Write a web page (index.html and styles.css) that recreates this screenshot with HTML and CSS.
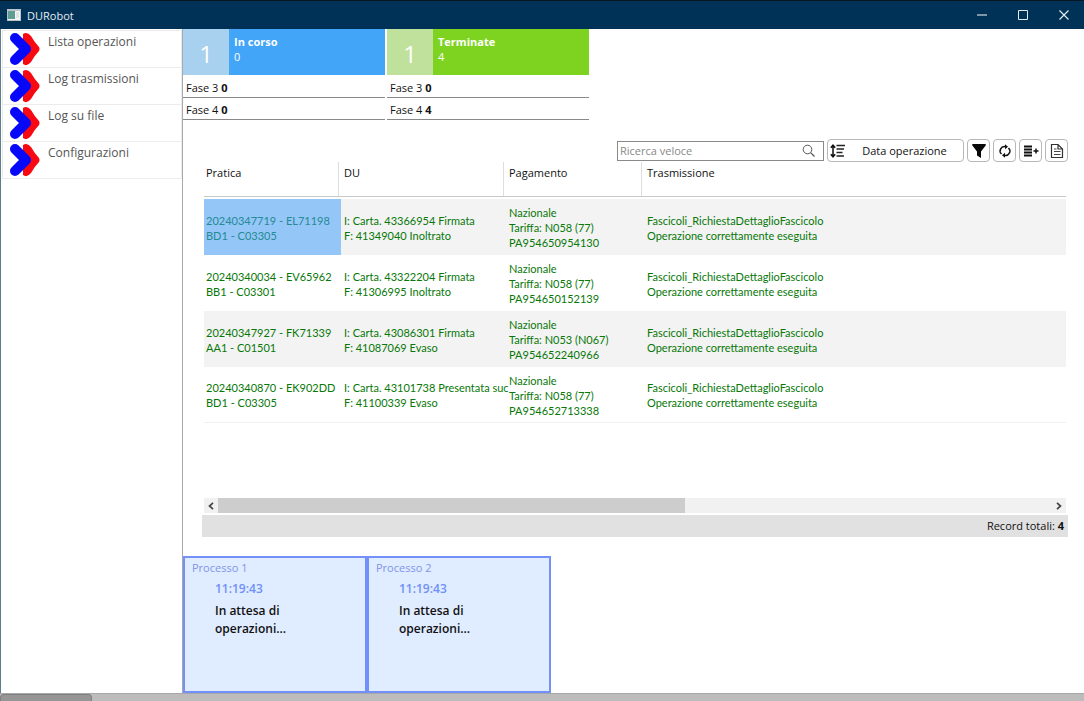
FILE: index.html
```html
<!DOCTYPE html>
<html lang="it">
<head>
<meta charset="utf-8">
<title>DURobot</title>
<link rel="stylesheet" href="styles.css">
</head>
<body>
<header class="titlebar">
  <svg class="app-icon" width="14" height="12" viewBox="0 0 14 12"><rect width="14" height="12" fill="#b9c4ca"/><rect x="1" y="2" width="12" height="9" fill="#f4f6f6"/><rect x="1" y="2" width="7" height="8" fill="#5f9c92"/><path d="M9 3h3v6H9z" fill="#dfe4e6"/></svg>
  <h1 class="app-title">DURobot</h1>
  <button class="win-btn" aria-label="Riduci"><svg width="12" height="12" viewBox="0 0 12 12"><path d="M1 6h10" stroke="#a9bac5" stroke-width="1.500" fill="none"/></svg></button>
  <button class="win-btn" aria-label="Ingrandisci"><svg width="12" height="12" viewBox="0 0 12 12"><path d="M1.500 1.500h9v9h-9z" stroke="#e4ebef" fill="none"/></svg></button>
  <button class="win-btn" aria-label="Chiudi"><svg width="12" height="12" viewBox="0 0 12 12"><path d="M1.500 1.500l9 9M10.500 1.500l-9 9" stroke="#e4ebef" stroke-width="1.200" fill="none"/></svg></button>
</header>
<div class="workspace">
  <nav class="sidebar">
    <a class="nav-item" href="#lista"><svg class="chevron" width="32" height="34" viewBox="0 0 32 34"><path d="M14 2Q18-1 22 4Q26 11 30 15Q31 17 30 19Q26 23 22 30Q18 35 14 32Z" fill="#f80810"/><path d="M6 6L17 17L6 28" stroke="#0808f8" stroke-width="10" stroke-linecap="round" stroke-linejoin="round" fill="none"/></svg><span>Lista operazioni</span></a>
    <a class="nav-item" href="#log"><svg class="chevron" width="32" height="34" viewBox="0 0 32 34"><path d="M14 2Q18-1 22 4Q26 11 30 15Q31 17 30 19Q26 23 22 30Q18 35 14 32Z" fill="#f80810"/><path d="M6 6L17 17L6 28" stroke="#0808f8" stroke-width="10" stroke-linecap="round" stroke-linejoin="round" fill="none"/></svg><span>Log trasmissioni</span></a>
    <a class="nav-item" href="#file"><svg class="chevron" width="32" height="34" viewBox="0 0 32 34"><path d="M14 2Q18-1 22 4Q26 11 30 15Q31 17 30 19Q26 23 22 30Q18 35 14 32Z" fill="#f80810"/><path d="M6 6L17 17L6 28" stroke="#0808f8" stroke-width="10" stroke-linecap="round" stroke-linejoin="round" fill="none"/></svg><span>Log su file</span></a>
    <a class="nav-item" href="#config"><svg class="chevron" width="32" height="34" viewBox="0 0 32 34"><path d="M14 2Q18-1 22 4Q26 11 30 15Q31 17 30 19Q26 23 22 30Q18 35 14 32Z" fill="#f80810"/><path d="M6 6L17 17L6 28" stroke="#0808f8" stroke-width="10" stroke-linecap="round" stroke-linejoin="round" fill="none"/></svg><span>Configurazioni</span></a>
  </nav>
  <main class="content">
    <section class="summary">
      <article class="stat stat-blue">
        <div class="stat-head"><div class="stat-badge">1</div><div class="stat-text"><b>In corso</b><span>0</span></div></div>
        <p class="phase">Fase 3 <b>0</b></p>
        <p class="phase">Fase 4 <b>0</b></p>
      </article>
      <article class="stat stat-green">
        <div class="stat-head"><div class="stat-badge">1</div><div class="stat-text"><b>Terminate</b><span>4</span></div></div>
        <p class="phase">Fase 3 <b>0</b></p>
        <p class="phase">Fase 4 <b>4</b></p>
      </article>
    </section>
    <section class="records">
      <div class="toolbar">
        <label class="search"><input type="text" placeholder="Ricerca veloce" aria-label="Ricerca veloce"><svg width="14" height="14" viewBox="0 0 14 14"><circle cx="5.500" cy="5.500" r="4.300" stroke="#555" fill="none"/><path d="M8.600 8.600L12.500 12.500" stroke="#555" stroke-width="1.300"/></svg></label>
        <button class="tool sort"><svg width="16" height="14" viewBox="0 0 16 14"><path d="M3 2v10M.8 3.800L3 1.200l2.200 2.600M.8 10.200L3 12.800l2.200-2.600" stroke="#111" stroke-width="1.500" fill="none"/><path d="M6.500 1.500H15M6.500 5H14M6.500 8.500h6M6.500 12H14" stroke="#222" stroke-width="1.300"/></svg><span>Data operazione</span></button>
        <button class="tool" aria-label="Filtro"><svg width="14" height="16" viewBox="0 0 14 16"><path d="M.3 1h13.400v1.500L9 8.500V15l-4-2.500v-4L.3 2.500z" fill="#080808"/></svg></button>
        <button class="tool" aria-label="Aggiorna"><svg width="14" height="16" viewBox="0 0 14 16"><path d="M3.500 11A4.300 4.300 0 0 1 7.500 3.700M10.500 5A4.300 4.300 0 0 1 6.500 12.300" stroke="#111" stroke-width="1.500" fill="none"/><path d="M7 1.200l3 2.500L7 6.200zM7 9.800l-3 2.500L7 14.800z" fill="#111"/></svg></button>
        <button class="tool" aria-label="Aggiungi colonna"><svg width="16" height="14" viewBox="0 0 16 14"><path d="M1 2.500h8M1 5.500h8M1 8.500h8M1 11.500h8" stroke="#111" stroke-width="1.800"/><path d="M10.500 7h5M13 4.500v5" stroke="#111" stroke-width="1.500"/></svg></button>
        <button class="tool" aria-label="Documento"><svg width="14" height="16" viewBox="0 0 14 16"><path d="M1.500 1.500H8L12.500 6v8.500h-11zM8 1.500V6h4.500" stroke="#333" stroke-width="1.200" fill="none"/><path d="M4 6h2.500M4 8.500h6.500M4 11.500h6.500" stroke="#444"/></svg></button>
      </div>
      <div class="grid-area">
        <table class="grid">
          <colgroup><col class="c-pratica"><col class="c-du"><col class="c-pag"><col></colgroup>
          <thead><tr><th>Pratica</th><th>DU</th><th>Pagamento</th><th>Trasmissione</th></tr></thead>
          <tbody>
            <tr><td class="selected">20240347719 - EL71198<br>BD1 - C03305</td><td>I: Carta. 43366954 Firmata<br>F: 41349040 Inoltrato</td><td>Nazionale<br>Tariffa: N058 (77)<br>PA954650954130</td><td>Fascicoli_RichiestaDettaglioFascicolo<br>Operazione correttamente eseguita</td></tr>
            <tr><td>20240340034 - EV65962<br>BB1 - C03301</td><td>I: Carta. 43322204 Firmata<br>F: 41306995 Inoltrato</td><td>Nazionale<br>Tariffa: N058 (77)<br>PA954650152139</td><td>Fascicoli_RichiestaDettaglioFascicolo<br>Operazione correttamente eseguita</td></tr>
            <tr><td>20240347927 - FK71339<br>AA1 - C01501</td><td>I: Carta. 43086301 Firmata<br>F: 41087069 Evaso</td><td>Nazionale<br>Tariffa: N053 (N067)<br>PA954652240966</td><td>Fascicoli_RichiestaDettaglioFascicolo<br>Operazione correttamente eseguita</td></tr>
            <tr><td>20240340870 - EK902DD<br>BD1 - C03305</td><td>I: Carta. 43101738 Presentata suc<br>F: 41100339 Evaso</td><td>Nazionale<br>Tariffa: N058 (77)<br>PA954652713338</td><td>Fascicoli_RichiestaDettaglioFascicolo<br>Operazione correttamente eseguita</td></tr>
          </tbody>
        </table>
      </div>
      <div class="scrollbar">
        <button class="scroll-btn" aria-label="Scorri a sinistra"><svg width="6" height="8" viewBox="0 0 6 8"><path d="M5 .8L1.500 4L5 7.200" stroke="#444" stroke-width="1.700" fill="none"/></svg></button>
        <div class="track"><div class="thumb"></div></div>
        <button class="scroll-btn" aria-label="Scorri a destra"><svg width="6" height="8" viewBox="0 0 6 8"><path d="M1 .8L4.500 4L1 7.200" stroke="#444" stroke-width="1.700" fill="none"/></svg></button>
      </div>
      <div class="total">Record totali:&nbsp;<b>4</b></div>
    </section>
    <section class="processes">
      <article class="process"><h2>Processo 1</h2><time>11:19:43</time><p>In attesa di operazioni...</p></article>
      <article class="process"><h2>Processo 2</h2><time>11:19:43</time><p>In attesa di operazioni...</p></article>
    </section>
  </main>
</div>
<div class="page-scroll"><div class="page-thumb"></div></div>
</body>
</html>
```

FILE: styles.css
```css
* { box-sizing: border-box; }
body {
  margin: 0;
  min-height: 100vh;
  display: flex;
  flex-direction: column;
  background: #fff;
  color: #111;
  font: 11px/15px "Open Sans", "Noto Sans", sans-serif;
}
h1, h2, p { margin: 0; font-weight: 400; }
button { font: inherit; color: inherit; padding: 0; }
b { font-weight: 700; }

.titlebar {
  height: 29px;
  display: flex;
  align-items: center;
  padding-left: 7px;
  background: #003156;
  border-top: 1px solid #0b1720;
  color: #e6edf2;
}
.app-title { flex: 1; margin-left: 6px; font-size: 11px; }
.win-btn {
  width: 41px;
  height: 28px;
  display: grid;
  place-items: center;
  border: 0;
  background: none;
}

.workspace { flex: 1; display: flex; }
.sidebar {
  width: 183px;
  flex: none;
  padding: 1px 0 0 1px;
  border-left: 1px solid #5d7e90;
  border-right: 1px solid #a8a8a8;
}
.nav-item {
  height: 37px;
  display: flex;
  gap: 7px;
  padding: 1px 0 0 6px;
  border: 1px solid #ececec;
  border-top-width: 0;
  color: #555;
  font-size: 12px;
  line-height: 20px;
  text-decoration: none;
}
.nav-item:first-child { height: 38px; border-top-width: 1px; }

.content { flex: 1; min-width: 0; display: flex; flex-direction: column; }
.summary { display: flex; gap: 2px; }
.stat { width: 202px; }
.stat-head { display: flex; height: 46px; margin-bottom: 1px; color: #fff; }
.stat-badge {
  width: 46px;
  display: grid;
  place-items: center;
  padding-top: 4px;
  font-size: 24px;
  line-height: 28px;
}
.stat-text { display: flex; flex-direction: column; padding: 5px; }
.stat-blue .stat-head { background: #42a5f7; }
.stat-blue .stat-badge { background: #a8d0ef; }
.stat-green .stat-head { background: #7ed321; }
.stat-green .stat-badge { background: #bfe19b; }
.phase { height: 22px; padding: 4px 3px 0; border-bottom: 1px solid #888; }

.records { flex: 1; display: flex; flex-direction: column; padding: 19px 16px 19px 19px; }
.toolbar { display: flex; align-items: center; justify-content: flex-end; gap: 3px; height: 23px; }
.search {
  width: 207px;
  height: 20px;
  display: flex;
  align-items: center;
  padding: 0 7px 0 2px;
  border: 1px solid #8a8a8a;
}
.search input {
  flex: 1;
  min-width: 0;
  padding: 0;
  border: 0;
  outline: 0;
  background: none;
  font: inherit;
}
.search input::placeholder { color: #888; opacity: 1; }
.tool {
  width: 23px;
  height: 23px;
  display: grid;
  place-items: center;
  background: #fff;
  border: 1px solid #b8b8b8;
  border-radius: 4px;
}
.sort { width: 137px; display: flex; align-items: center; padding: 0 0 0 2px; }
.sort span { flex: 1; }

.grid-area { flex: 1; padding: 0 2px; }
.grid { width: 100%; table-layout: fixed; border-collapse: separate; border-spacing: 0; }
.c-pratica { width: 137px; }
.c-du { width: 165px; }
.c-pag { width: 138px; }
.grid th {
  position: relative;
  height: 35px;
  padding: 3px 3px 0;
  border-bottom: 1px solid #c8c8c8;
  text-align: left;
  vertical-align: top;
  font-weight: 400;
}
.grid th:not(:last-child)::after {
  content: "";
  position: absolute;
  top: 0;
  right: 2px;
  height: 34px;
  border-right: 1px solid #dedede;
}
.grid tbody::before { content: ""; display: block; height: 2px; }
.grid td {
  height: 56px;
  padding: 1px 0 0 3px;
  color: #087808;
  font-family: Lato, "Open Sans", sans-serif;
  white-space: nowrap;
}
.grid th:first-child, .grid td:first-child { padding-left: 2px; }
.grid tbody tr:nth-child(odd) { background: #f3f3f3; }
.grid tbody tr:last-child td { border-bottom: 1px solid #f0f0f0; }
.grid td.selected { background: #94c6f8; color: #258a94; }

.scrollbar { display: flex; height: 15px; margin: 0 2px 2px; background: #f1f1f1; }
.scroll-btn { width: 14px; display: grid; place-items: center; border: 0; background: none; }
.track { flex: 1; }
.thumb { width: 56%; height: 100%; background: #cdcdcd; }
.total {
  height: 22px;
  display: flex;
  align-items: center;
  justify-content: flex-end;
  padding: 0 4px 2px 0;
  background: #e1e1e1;
}

.processes { display: flex; }
.process {
  width: 184px;
  height: 137px;
  padding: 2px 7px;
  border: 2px solid #7290f8;
  background: #e0ecff;
}
.process h2 { color: #7f94ea; font-size: 11px; line-height: 15px; }
.process time {
  display: block;
  margin: 6px 0 0 23px;
  color: #7090fa;
  font-size: 12px;
  font-weight: 600;
  line-height: 16px;
}
.process p {
  width: 90px;
  margin: 5px 0 0 23px;
  font-size: 12px;
  font-weight: 600;
  line-height: 18px;
}

.page-scroll { height: 8px; background: #bcbcbc; border-top: 1px solid #a8a8a8; }
.page-thumb { width: 92px; height: 7px; background: #969696; border: 1px solid #808080; border-bottom: 0; border-radius: 4px 4px 0 0; }
```
